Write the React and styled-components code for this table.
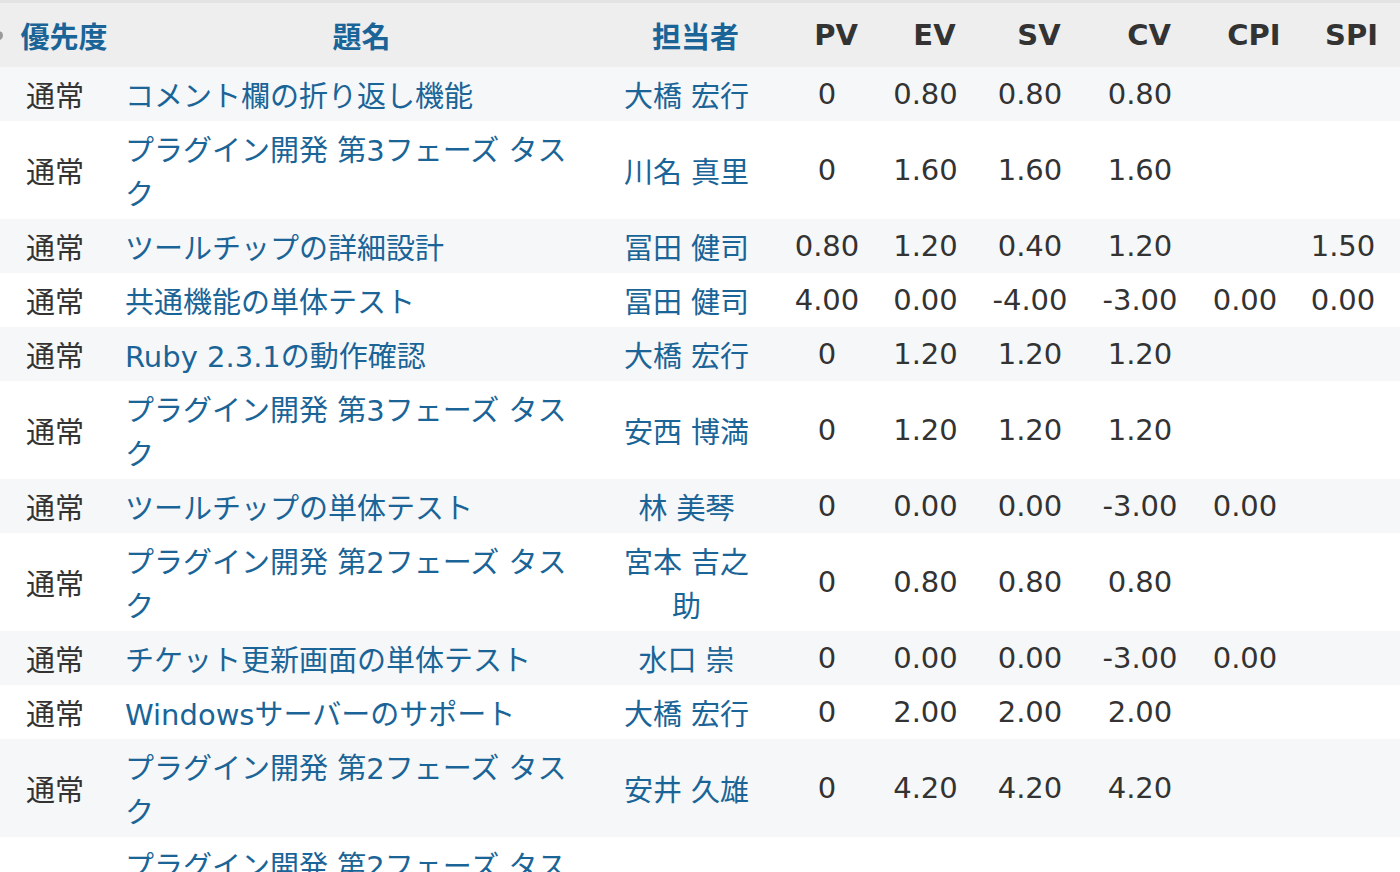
import React from "react";
import styled, { createGlobalStyle } from "styled-components";

const Global = createGlobalStyle`
  html, body { margin: 0; padding: 0; background: #fff; overflow: hidden; }
  body { font-family: "DejaVu Sans", Verdana, "Noto Sans CJK JP", sans-serif; }
`;

const Wrap = styled.div`
  width: 1400px;
  height: 872px;
  overflow: hidden;
  border-top: 3px solid #e3e3e3;
  box-sizing: border-box;
`;

const Table = styled.table`
  width: 1400px;
  table-layout: fixed;
  border-collapse: collapse;
  font-family: "DejaVu Sans", Verdana, "Noto Sans CJK JP", sans-serif;
  font-size: 29px;
  line-height: 44px;
  color: #333;
`;

const HeadRow = styled.tr`
  background: #eeeeee;
  height: 64px;
`;

const Th = styled.th`
  position: relative;
  padding: 0 0 0 ${(p) => p.$pl ?? 18}px;
  text-align: center;
  font-weight: bold;
  white-space: nowrap;
  color: ${(p) => (p.$link ? "#1a6497" : "#333")};
  font-family: ${(p) =>
    p.$link
      ? `"Noto Sans CJK JP", sans-serif`
      : `"DejaVu Sans", Verdana, sans-serif`};
`;

const EdgeMark = styled.span`
  position: absolute;
  left: -6px;
  top: 28px;
  width: 9px;
  height: 9px;
  border-radius: 50%;
  background: #9a9a9a;
`;

const Row = styled.tr`
  background: ${(p) => (p.$odd ? "#f6f7f8" : "#ffffff")};
`;

const Td = styled.td`
  padding: 5px 0;
  text-align: center;
  vertical-align: middle;
  white-space: nowrap;
`;

const Priority = styled(Td)`
  font-family: "Noto Sans CJK JP", sans-serif;
  color: #333;
`;

const Subject = styled(Td)`
  text-align: left;
  white-space: normal;
  padding: 8px 27px 2px 15px;
`;

const Assignee = styled(Td)`
  white-space: normal;
  padding: 8px 21px 2px;
`;

const Link = styled.a`
  color: #1a6497;
  text-decoration: none;
  font-family: "DejaVu Sans", Verdana, "Noto Sans CJK JP", sans-serif;
`;

const Num = styled(Td)`
  padding-right: ${(p) => p.$pr ?? 0}px;
`;

const rows = [
  ["通常", "コメント欄の折り返し機能", "大橋 宏行", "0", "0.80", "0.80", "0.80", "", ""],
  ["通常", "プラグイン開発 第3フェーズ タスク", "川名 真里", "0", "1.60", "1.60", "1.60", "", ""],
  ["通常", "ツールチップの詳細設計", "冨田 健司", "0.80", "1.20", "0.40", "1.20", "", "1.50"],
  ["通常", "共通機能の単体テスト", "冨田 健司", "4.00", "0.00", "-4.00", "-3.00", "0.00", "0.00"],
  ["通常", "Ruby 2.3.1の動作確認", "大橋 宏行", "0", "1.20", "1.20", "1.20", "", ""],
  ["通常", "プラグイン開発 第3フェーズ タスク", "安西 博満", "0", "1.20", "1.20", "1.20", "", ""],
  ["通常", "ツールチップの単体テスト", "林 美琴", "0", "0.00", "0.00", "-3.00", "0.00", ""],
  ["通常", "プラグイン開発 第2フェーズ タスク", "宮本 吉之助", "0", "0.80", "0.80", "0.80", "", ""],
  ["通常", "チケット更新画面の単体テスト", "水口 崇", "0", "0.00", "0.00", "-3.00", "0.00", ""],
  ["通常", "Windowsサーバーのサポート", "大橋 宏行", "0", "2.00", "2.00", "2.00", "", ""],
  ["通常", "プラグイン開発 第2フェーズ タスク", "安井 久雄", "0", "4.20", "4.20", "4.20", "", ""],
  ["", "プラグイン開発 第2フェーズ タスク", "", "", "", "", "", "", ""],
];

const widths = [110, 485, 183, 98, 99, 110, 110, 100, 105];

export default function App() {
  return (
    <>
      <Global />
      <Wrap>
        <Table>
          <colgroup>
            {widths.map((w, i) => (
              <col key={i} style={{ width: w }} />
            ))}
          </colgroup>
          <thead>
            <HeadRow>
              <Th $link>
                <EdgeMark />
                優先度
              </Th>
              <Th $link>題名</Th>
              <Th $link>担当者</Th>
              <Th>PV</Th>
              <Th>EV</Th>
              <Th>SV</Th>
              <Th>CV</Th>
              <Th>CPI</Th>
              <Th $pl={8}>SPI</Th>
            </HeadRow>
          </thead>
          <tbody>
            {rows.map((r, i) => (
              <Row key={i} $odd={i % 2 === 0}>
                <Priority>{r[0]}</Priority>
                <Subject>
                  <Link href="#">{r[1]}</Link>
                </Subject>
                <Assignee>
                  {r[2] && <Link href="#">{r[2]}</Link>}
                </Assignee>
                <Num>{r[3]}</Num>
                <Num>{r[4]}</Num>
                <Num>{r[5]}</Num>
                <Num>{r[6]}</Num>
                <Num>{r[7]}</Num>
                <Num $pr={9}>{r[8]}</Num>
              </Row>
            ))}
          </tbody>
        </Table>
      </Wrap>
    </>
  );
}
